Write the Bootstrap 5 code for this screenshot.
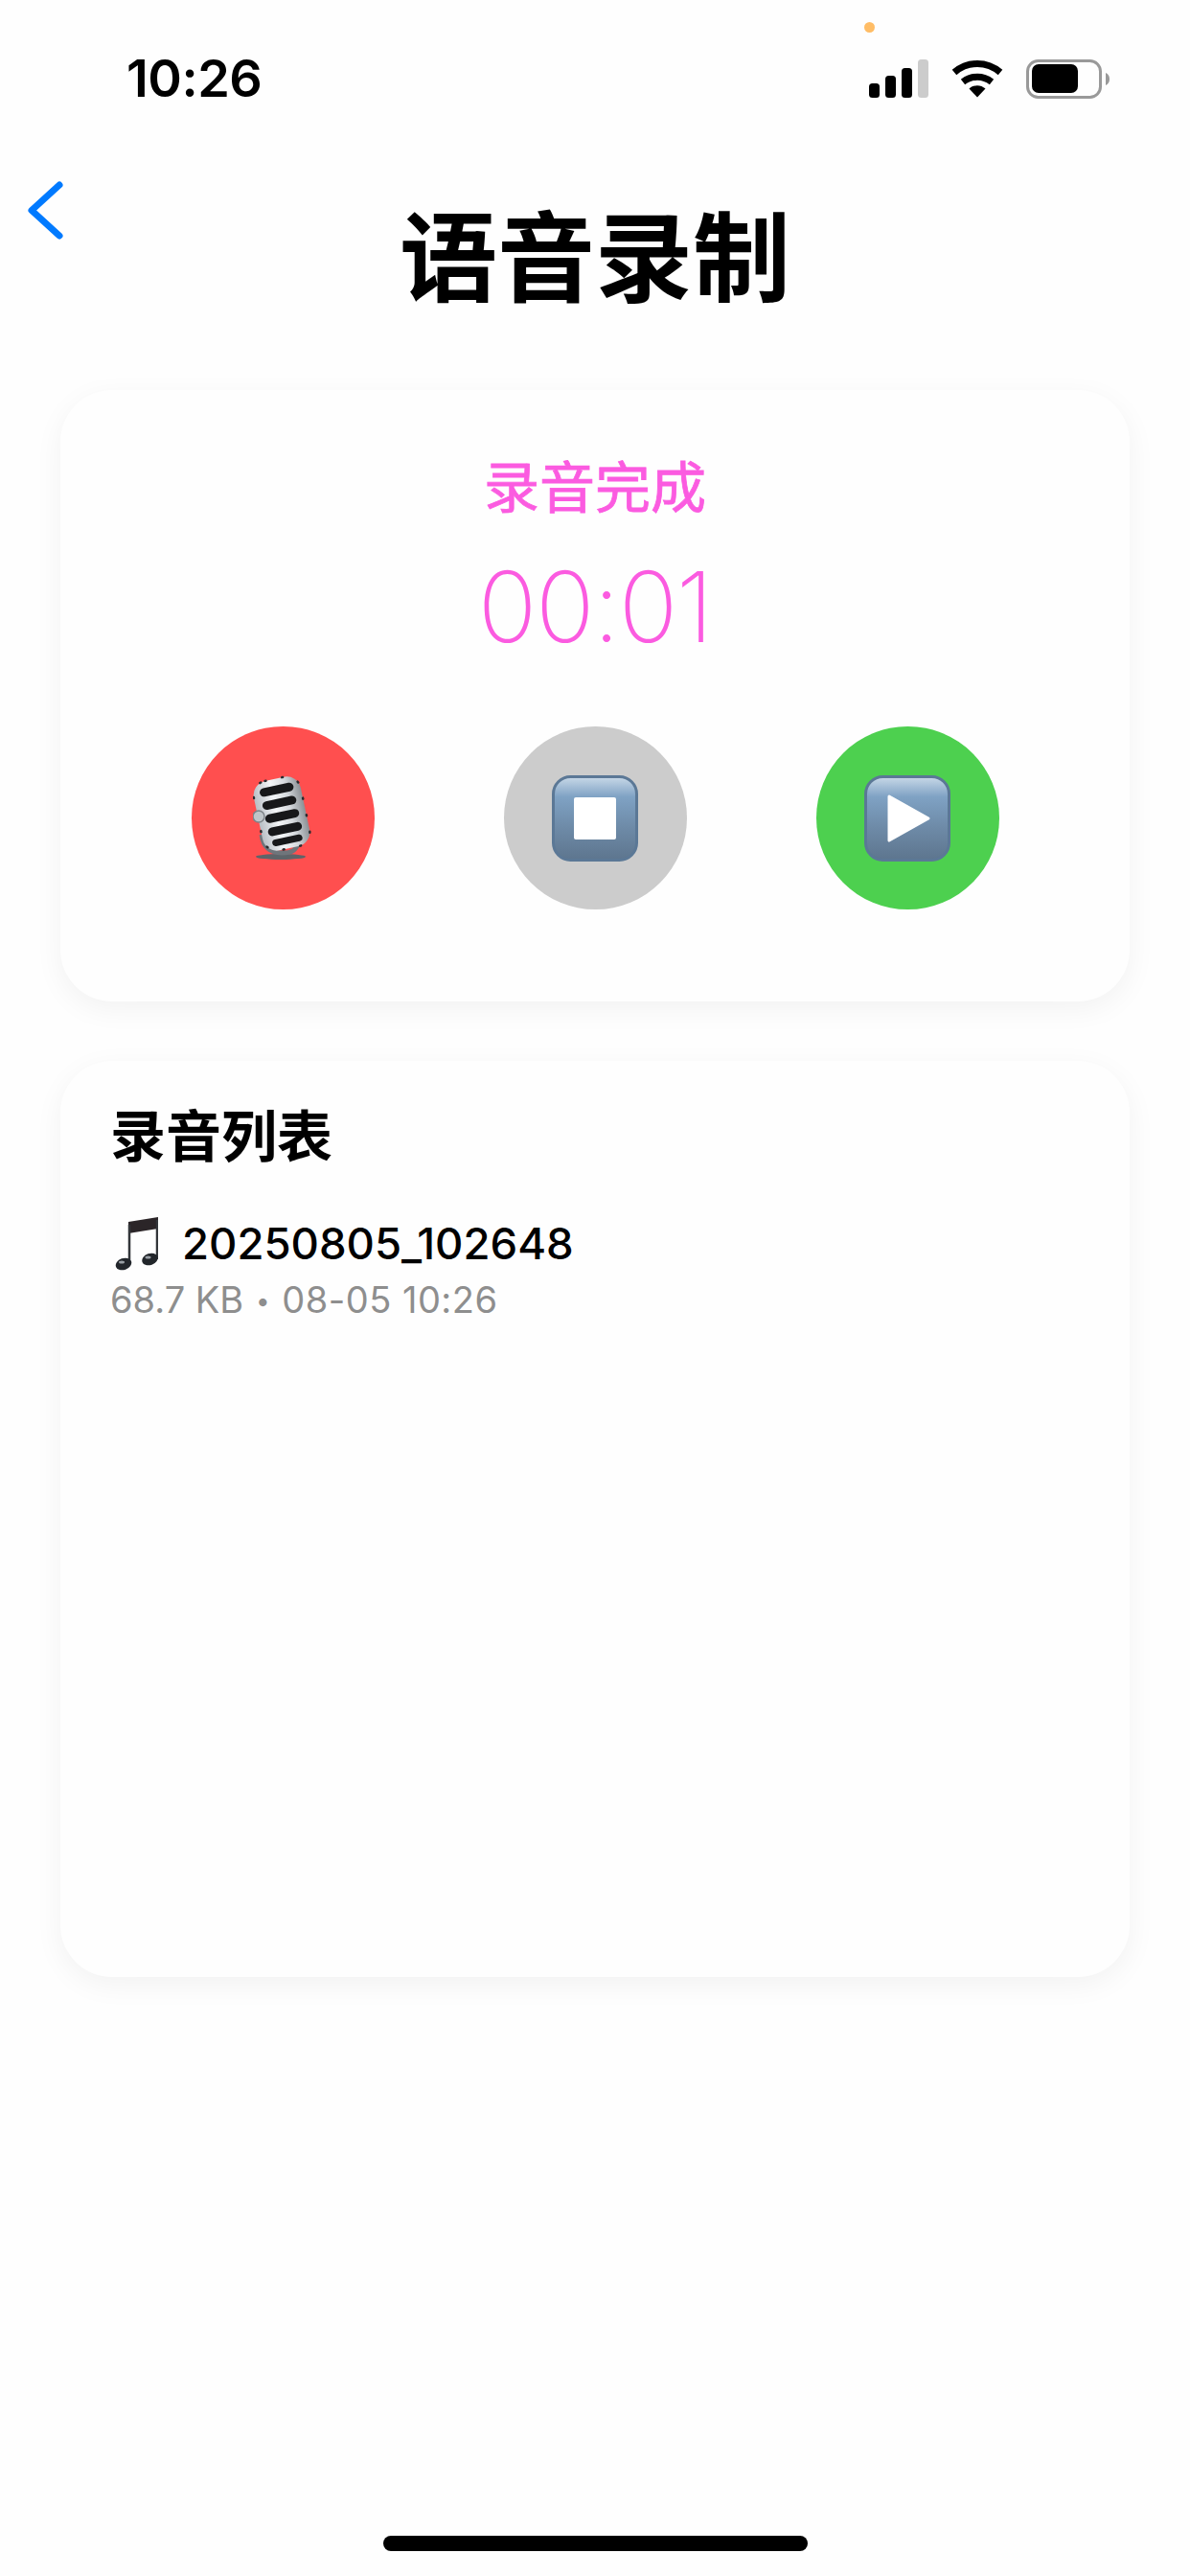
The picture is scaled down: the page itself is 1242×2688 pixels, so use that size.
<!DOCTYPE html>
<html lang="zh-CN">
<head>
  <meta charset="UTF-8" />
  <meta name="viewport" content="width=device-width, initial-scale=1.0" />
  <title>语音录制</title>
  <link href="https://cdn.jsdelivr.net/npm/bootstrap@5.3.3/dist/css/bootstrap.min.css" rel="stylesheet" />
  <style>
    body {
      width: 1242px;
      height: 2688px;
      overflow: hidden;
      background-color: #fefefe;
      color: #000;
      font-family: Inter, "Noto Sans CJK SC", sans-serif;
    }
    .screen { position: relative; height: 2688px; }
    .orange-dot {
      position: absolute; left: 902px; top: 23px;
      width: 11px; height: 11px; border-radius: 50%;
      background: #ffbd66;
    }
    .status-row { height: 164px; padding: 56px 83px 0 132px; }
    .clock { font-size: 54px; font-weight: 600; line-height: 52px; letter-spacing: -0.5px; }
    .status-icons { margin-top: 6px; gap: 24px; }
    .title-row { height: 243px; position: relative; }
    .back-btn { position: absolute; left: 27px; top: 23px; line-height: 0; }
    .page-title {
      font-family: "Noto Sans CJK SC", sans-serif;
      font-size: 102px; font-weight: 700; line-height: 102px;
      margin: 0; padding-top: 48px; text-align: center; color: #000;
    }
    .panel {
      background: #fefefe;
      border-radius: 54px;
      margin: 0 63px;
      box-shadow: 0 8px 30px rgba(0,0,0,.05);
    }
    .panel-rec { height: 638px; margin-bottom: 62px; padding-top: 63px; }
    .panel-list { height: 956px; padding: 42px 52px; }
    .rec-status {
      font-family: "Noto Sans CJK SC", sans-serif;
      font-size: 58px; font-weight: 400; line-height: 70px;
      -webkit-text-stroke: .8px #fb5be0;
      color: #fb5be0; text-align: center;
    }
    .rec-time {
      font-size: 102px; font-weight: 200; line-height: 110px; letter-spacing: -1.5px;
      color: #fb5be0; text-align: center; margin-top: 38px;
    }
    .rec-btns { gap: 135px; margin-top: 70px; }
    .rec-btn {
      width: 191px; height: 191px; padding: 0; border: 0; border-radius: 50%;
    }
    .btn-red { background: #ff4f4f; }
    .btn-gray { background: #ccc; }
    .btn-green { background: #4dd04f; }
    .list-title {
      font-family: "Noto Sans CJK SC", sans-serif;
      font-size: 58px; font-weight: 700; line-height: 66px; margin: 0; color: #000;
    }
    .file-row { margin-top: 51px; gap: 25px; height: 64px; }
    .file-name { font-size: 45.5px; font-weight: 500; line-height: 64px; }
    .file-meta { font-size: 38px; line-height: 46px; color: #8e8e8e; margin-top: 3px; }
    .meta-dot { font-size: 26px; margin: 0 2px; vertical-align: 3px; }
    .meta-date { letter-spacing: .5px; }
    .home-bar {
      position: absolute; left: 400px; top: 2646px;
      width: 443px; height: 16px; border-radius: 8px; background: #000;
    }
  </style>
</head>
<body>
  <div class="screen">
    <span class="orange-dot"></span>

    <div class="status-row d-flex justify-content-between align-items-start">
      <span class="clock">10:26</span>
      <div class="status-icons d-flex align-items-start">
        <svg width="62" height="40" viewBox="0 0 62 40">
          <rect x="0" y="25" width="11" height="15" rx="3.5" fill="#000"/>
          <rect x="17" y="17" width="11" height="23" rx="3.5" fill="#000"/>
          <rect x="34" y="9" width="11" height="31" rx="3.5" fill="#000"/>
          <rect x="51" y="0" width="11" height="40" rx="3.5" fill="#ccc"/>
        </svg>
        <svg width="54" height="40" viewBox="0 0 54 40">
          <path d="M3 13.5C17 1.5 37 1.5 51 13.5" fill="none" stroke="#000" stroke-width="7"/>
          <path d="M12 23.5C21 16.5 33 16.5 42 23.5" fill="none" stroke="#000" stroke-width="7"/>
          <path d="M18.5 30.5C23.5 26 30.5 26 35.5 30.5L27 39.5Z" fill="#000"/>
        </svg>
        <svg width="88" height="41" viewBox="0 0 88 41">
          <rect x="1.5" y="1.5" width="76" height="38" rx="11" fill="none" stroke="#999" stroke-width="3"/>
          <rect x="6" y="5" width="48" height="30" rx="7" fill="#000"/>
          <path d="M83 14C85.5 15 87 17.5 87 20.5S85.5 26 83 27Z" fill="#999"/>
        </svg>
      </div>
    </div>

    <div class="title-row">
      <a href="#" class="back-btn">
        <svg width="42" height="66" viewBox="0 0 42 66">
          <path d="M35 6L6 32.5L35 59" fill="none" stroke="#007aff" stroke-width="7" stroke-linecap="round" stroke-linejoin="round"/>
        </svg>
      </a>
      <h1 class="page-title">语音录制</h1>
    </div>

    <div class="panel panel-rec">
      <div class="rec-status">录音完成</div>
      <div class="rec-time">00:01</div>
      <div class="rec-btns d-flex justify-content-center">
        <button type="button" class="btn rec-btn btn-red d-flex align-items-center justify-content-center">
          <svg width="62" height="90" viewBox="0 0 62 90">
            <defs>
              <linearGradient id="micBody" x1="0" x2="1" y1="0" y2="0">
                <stop offset="0" stop-color="#b8bec4"/>
                <stop offset=".4" stop-color="#f4f6f8"/>
                <stop offset=".7" stop-color="#d4d8dc"/>
                <stop offset="1" stop-color="#8b9095"/>
              </linearGradient>
            </defs>
            <ellipse cx="29" cy="85" rx="26" ry="3" fill="#5d6469"/>
            <path d="M9 62C11 76 18 81 30 81S44 78 47 72" fill="none" stroke="#6f757b" stroke-width="5"/>
            <g transform="rotate(-12 30 40)">
              <rect x="5" y="3" width="50" height="74" rx="15" fill="url(#micBody)"/>
              <rect x="5" y="3" width="50" height="74" rx="15" fill="none" stroke="#2a2b2e" stroke-width="2.5" stroke-linecap="round" stroke-dasharray="1 17"/>
              <rect x="12" y="10" width="36" height="9" rx="4.5" fill="#17181a"/>
              <rect x="12" y="24" width="36" height="9" rx="4.5" fill="#17181a"/>
              <rect x="12" y="38" width="36" height="9" rx="4.5" fill="#17181a"/>
              <rect x="12" y="52" width="36" height="9" rx="4.5" fill="#17181a"/>
              <rect x="14" y="65" width="32" height="7" rx="3.5" fill="#17181a"/>
            </g>
            <circle cx="6" cy="43" r="6" fill="#bfc5c9" stroke="#7d8388" stroke-width="1.5"/>
          </svg>
        </button>
        <button type="button" class="btn rec-btn btn-gray d-flex align-items-center justify-content-center">
          <svg width="90" height="90" viewBox="0 0 90 90">
            <defs>
              <linearGradient id="keyFill" x1="0" x2="0" y1="0" y2="1">
                <stop offset="0" stop-color="#c9d9e8"/>
                <stop offset=".24" stop-color="#7fa2c4"/>
                <stop offset=".6" stop-color="#6e8ba8"/>
                <stop offset="1" stop-color="#5d758e"/>
              </linearGradient>
            </defs>
            <rect x="1.5" y="1.5" width="87" height="87" rx="18" fill="url(#keyFill)" stroke="#5b7896" stroke-width="3"/>
            <rect x="23" y="23" width="44" height="44" rx="2" fill="#fff"/>
          </svg>
        </button>
        <button type="button" class="btn rec-btn btn-green d-flex align-items-center justify-content-center">
          <svg width="90" height="90" viewBox="0 0 90 90">
            <rect x="1.5" y="1.5" width="87" height="87" rx="18" fill="url(#keyFill)" stroke="#5b7896" stroke-width="3"/>
            <path d="M26 22L67 45L26 68Z" fill="#fff" stroke="#fff" stroke-width="3" stroke-linejoin="round"/>
          </svg>
        </button>
      </div>
    </div>

    <div class="panel panel-list">
      <h2 class="list-title">录音列表</h2>
      <div class="file-row d-flex align-items-center">
        <svg class="ms-1" width="46" height="56" viewBox="0 0 46 56">
          <path d="M15 5L46 0V12L15 17Z" fill="#2b2528"/>
          <path d="M16 8V49M45 3V44" fill="none" stroke="#33363a" stroke-width="2.5"/>
          <ellipse cx="10" cy="49" rx="8.5" ry="6" transform="rotate(-20 10 49)" fill="#22262b"/>
          <ellipse cx="37.5" cy="44" rx="8.5" ry="6" transform="rotate(-20 37.5 44)" fill="#22262b"/>
          <ellipse cx="8" cy="47" rx="3" ry="1.5" fill="#9aa0a6"/>
          <ellipse cx="35.5" cy="42" rx="3" ry="1.5" fill="#9aa0a6"/>
        </svg>
        <span class="file-name">20250805_102648</span>
      </div>
      <div class="file-meta">68.7 KB <span class="meta-dot">•</span> <span class="meta-date">08-05 10:26</span></div>
    </div>

    <div class="home-bar"></div>
  </div>

  <script src="https://cdn.jsdelivr.net/npm/bootstrap@5.3.3/dist/js/bootstrap.bundle.min.js"></script>
</body>
</html>
